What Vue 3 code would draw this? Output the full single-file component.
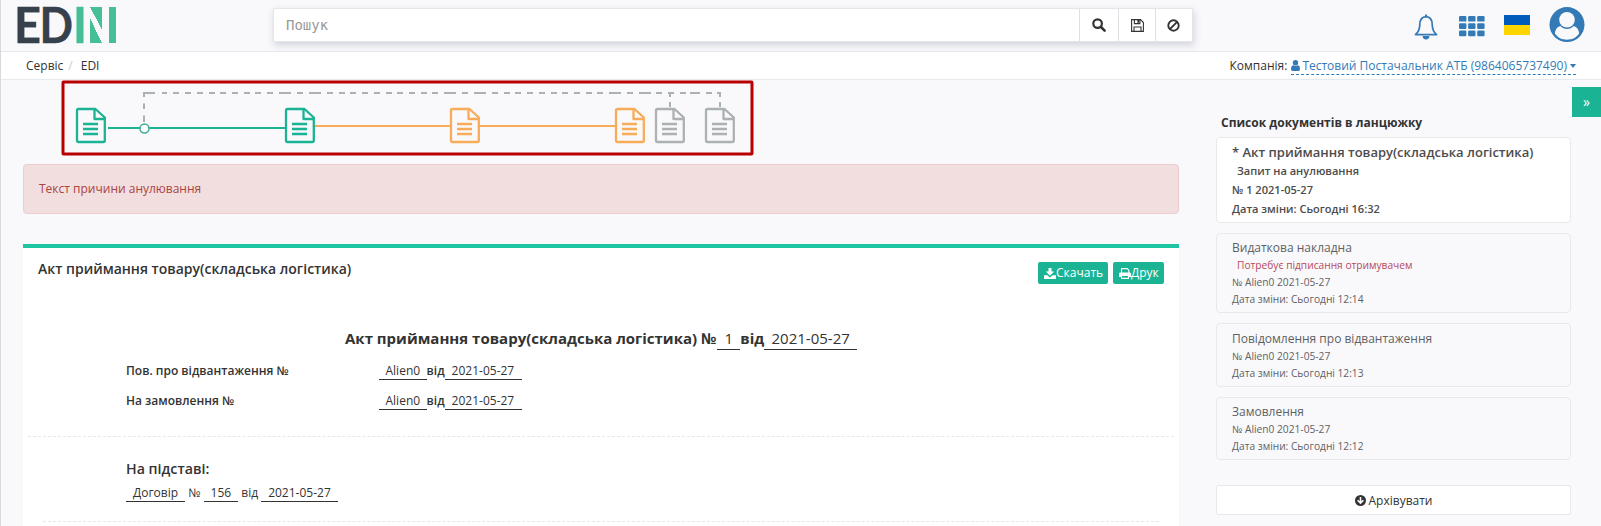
<script setup>
const dashes = [
  [143, 155], [162, 167], [173, 179], [185, 191], [197, 203], [209, 215], [220, 226], [232, 238], [244, 250],
  [255, 261], [267, 273], [279, 291], [297, 303], [309, 321], [327, 333], [339, 345], [350, 356], [362, 368],
  [374, 380], [386, 392], [397, 403], [409, 415], [421, 427], [432, 438], [444, 456], [462, 468], [474, 486],
  [492, 498], [504, 510], [515, 521], [527, 533], [539, 545], [551, 557], [562, 568], [574, 580], [586, 592],
  [597, 603], [609, 621], [627, 633], [639, 651], [656, 662], [668, 674], [680, 686], [690, 700], [706, 712],
  [717, 721]
]
const dashPath = dashes.map(([a, b]) => `M${a} 93H${b}`).join('')
const nodes = [
  { x: 76, c: '#1ab394' }, { x: 285, c: '#1ab394' }, { x: 450, c: '#f8ac59' },
  { x: 615, c: '#f8ac59' }, { x: 655, c: '#acb1b3' }, { x: 705, c: '#acb1b3' }
]
const docs = [
  { title: 'Видаткова накладна', status: 'Потребує підписання отримувачем', time: '12:14', cls: 'd2' },
  { title: 'Повідомлення про відвантаження', time: '12:13', cls: 'd3' },
  { title: 'Замовлення', time: '12:12', cls: 'd4' }
]
const refs = ['Пов. про відвантаження №', 'На замовлення №']
</script>

<template>
  <div class="page">
    <header class="top">
      <div class="logo">
        <svg width="72" height="51" viewBox="0 0 72 51">
          <g font-family="Lato" font-weight="700" font-size="50" fill="#37414d" stroke="#37414d" stroke-width=".4">
            <text x="-1" y="43" textLength="27" lengthAdjust="spacingAndGlyphs">E</text>
            <text x="24.500" y="43" textLength="33.500" lengthAdjust="spacingAndGlyphs">D</text>
            <text x="58" y="43" textLength="14" lengthAdjust="spacingAndGlyphs" fill="#46be96" stroke="#46be96">I</text>
          </g>
        </svg>
        <div class="mark"><i class="slant"></i><i class="bar"></i></div>
      </div>
      <div class="search">
        <div class="field">Пошук</div>
        <div class="sb b1">
          <svg width="14" height="14" viewBox="0 0 14 14"><circle cx="5.6" cy="5.6" r="4.3" fill="none" stroke="#333" stroke-width="2.2" /><path d="M9 9l3.6 3.6" stroke="#333" stroke-width="2.6" stroke-linecap="round" /></svg>
        </div>
        <div class="sb b2">
          <svg width="13" height="13" viewBox="0 0 13 13" fill="none" stroke="#333" stroke-width="1.1"><path d="M.6 .6H9.5L12.4 3.5V12.4H.6zM3 12.4V8h7v4.4M3.4 .6V4.6H8.9V.6" /><path d="M6.4 1h1.800v2.800H6.400z" fill="#333" stroke="none" /></svg>
        </div>
        <div class="sb b3">
          <svg width="13" height="13" viewBox="0 0 13 13" fill="none" stroke="#333" stroke-width="1.9"><circle cx="6.5" cy="6.5" r="5.2" /><path d="M2.9 10.1L10.1 2.9" /></svg>
        </div>
      </div>
      <div class="tools">
        <svg class="bell" width="24" height="28" viewBox="0 0 24 28"><path d="M12 3.6C7.5 3.8 5.9 7.2 5.8 11.5C5.700 17 4.5 19.200 1.400 21.600H22.600C19.500 19.200 18.300 17 18.200 11.500C18.100 7.200 16.500 3.800 12 3.600Z" fill="none" stroke="#337ab7" stroke-width="1.700" stroke-linejoin="round" /><path d="M11 1.500h2v2.500h-2zM8.600 23h6.800a3.400 3.400 0 0 1-6.800 0z" fill="#337ab7" /></svg>
        <svg class="apps" width="26" height="21" viewBox="0 0 26 21" fill="#337ab7"><template v-for="r in 3" :key="r"><rect v-for="c in 3" :key="c" :x="(c - 1) * 9.1" :y="(r - 1) * 7.3" width="7.4" height="5.6" rx="1.2" /></template></svg>
        <div class="flag"></div>
        <svg class="user" width="36" height="36" viewBox="0 0 36 36"><circle cx="18" cy="17.600" r="17.500" fill="#337ab7" /><path d="M11.300 19C8 20 6 23 5.900 26.600C8.800 31 13 32.800 18 32.800s9.200-1.800 12.100-6.200C30 23 28 20 24.700 19C22.800 21 20.600 22 18 22s-4.800-1-6.700-3z" fill="#f9f9fb" /><circle cx="18" cy="12.700" r="7.800" fill="#f9f9fb" /></svg>
      </div>
    </header>

    <nav class="crumbs">
      <span>Сервіс</span><span class="sep">/</span><span>EDI</span>
      <span class="company">Компанія:</span>
      <a class="link"><svg width="9" height="11" viewBox="0 0 9 11" fill="#337ab7"><circle cx="4.500" cy="2.700" r="2.700" /><path d="M0 9.200C0 6.500 1 5.300 2.300 5.200Q4.500 6.800 6.700 5.200C8 5.300 9 6.500 9 9.200Q9 11 7.400 11H1.600Q0 11 0 9.200z" /></svg><span class="cname">Тестовий Постачальник АТБ (9864065737490)</span><i class="caret"></i></a>
    </nav>

    <div class="cols">
      <main class="main">
        <svg class="chain" width="693" height="77" viewBox="61 79 693 77" fill="none">
          <rect x="63" y="82" width="689" height="72" rx="0.500" stroke="#b80000" stroke-width="3" />
          <g stroke="#acb1b3" stroke-width="2">
            <path :d="dashPath" />
            <path d="M144 92v5M144 103.500v5.500M144 115.500v6.500M670 92v5M670 102v5M720 92v5M720 102v5" />
          </g>
          <path d="M108 128H285" stroke="#1ab394" stroke-width="2" />
          <path d="M314 126H450M479 126H615" stroke="#f8ac59" stroke-width="2" />
          <circle cx="144.500" cy="128.500" r="4.500" fill="#fff" stroke="#3fae93" stroke-width="1.500" />
          <g v-for="n in nodes" :key="n.x" :transform="`translate(${n.x} 108)`" :stroke="n.c" stroke-width="2.300" stroke-linejoin="round">
            <path d="M2.500 1H19.500L28.800 9.500V32.500Q28.800 34 27.300 34H2.500Q1 34 1 32.500V2.500Q1 1 2.500 1zM18.500 1V11H28.800" fill="#f9f9fb" />
            <path d="M7 16H22M7 21H22M7 26H22" />
          </g>
        </svg>

        <div class="alert">Текст причини анулювання</div>

        <section class="card">
          <div class="chead">
            <span class="ctitle">Акт приймання товару(складська логістика)</span>
            <div class="btns">
              <span class="btn w1"><svg width="12" height="11" viewBox="0 0 12 11" fill="#fff"><path d="M4.500 0h3v3.500h2.700L6 7.700 1.800 3.500h2.700zM0 7.300h3.300L6 9.400l2.700-2.100H12V11H0z" /></svg><span>Скачать</span></span>
              <span class="btn w2"><svg width="12" height="11" viewBox="0 0 12 11"><path d="M2.500 5V.6h5.700l1.600 1.600V5M2.500 7.500v2.900h7V7.500z" fill="none" stroke="#fff" stroke-width="1.100" /><path d="M1.400 4.600h9.200Q12 4.600 12 6v3H9.500V7.200h-7V9H0V6q0-1.400 1.400-1.400z" fill="#fff" /></svg><span>Друк</span></span>
            </div>
          </div>
          <div class="doc-title"><b>Акт приймання товару(складська логістика) №</b><span class="u">1</span><b>від</b><span class="u">2021-05-27</span></div>
          <div v-for="r in refs" :key="r" class="ref">
            <span class="lab">{{ r }}</span><span class="u">Alien0</span><b>від</b><span class="u">2021-05-27</span>
          </div>
          <div class="rule"></div>
          <div class="basis">На підставі:</div>
          <div class="contract"><span class="u">Договір</span><i>№</i><span class="u">156</span><i>від</i><span class="u">2021-05-27</span></div>
          <div class="rule inner"></div>
        </section>
      </main>

      <aside class="side">
        <div class="toggle">»</div>
        <h4>Список документів в ланцюжку</h4>
        <div class="doc active">
          <div class="t">* Акт приймання товару(складська логістика)</div>
          <div class="s">Запит на анулювання</div>
          <div>№ 1 2021-05-27</div>
          <div>Дата зміни: Сьогодні 16:32</div>
        </div>
        <div v-for="d in docs" :key="d.title" class="doc" :class="d.cls">
          <div class="t">{{ d.title }}</div>
          <div v-if="d.status" class="s">{{ d.status }}</div>
          <div>№ Alien0 2021-05-27</div>
          <div>Дата зміни: Сьогодні {{ d.time }}</div>
        </div>
        <div class="archive"><svg width="11" height="11" viewBox="0 0 11 11"><circle cx="5.500" cy="5.500" r="5.500" fill="#333" /><path d="M5.500 2v6M2.600 5.300L5.500 8.200 8.400 5.300" fill="none" stroke="#fff" stroke-width="1.600" /></svg><span>Архівувати</span></div>
      </aside>
    </div>
  </div>
</template>

<style>
body { background: #f9f9fb; overflow: hidden; }
</style>
<style scoped>
* { box-sizing: border-box; }
.page { width: 1601px; height: 526px; overflow: hidden; border-left: 1px solid #d8d9dc; font: 12px/18px "Open Sans", "Noto Sans", sans-serif; color: #333; background: #f9f9fb; white-space: nowrap; }
.page svg { display: block; flex: none; }
i { font-style: normal; }
b { font-weight: 600; }
.top { height: 52px; border-bottom: 1px solid #e7eaec; display: flex; align-items: flex-start; }
.logo { display: flex; margin-left: 14px; width: 101px; gap: 3px; }
.logo svg { overflow: visible; }
.mark { display: flex; margin-top: 7px; height: 36px; width: 26px; gap: 7px; }
.slant { width: 12px; height: 36px; background: linear-gradient(to top right, transparent 50%, #46be96 50.500%) 0 0 / 12px 23px no-repeat, linear-gradient(to top right, #46be96 49.500%, transparent 50%) 0 100% / 12px 25px no-repeat; }
.bar { width: 7px; background: #46be96; }
.search { display: flex; margin: 8px 0 0 157px; height: 34px; width: 920px; border: 1px solid #e5e6ea; background: #fff; box-shadow: 1px 3px 7px rgba(90, 95, 130, .25); }
.field { flex: 1; padding-left: 12px; font: 14px/32px "DejaVu Sans Mono", monospace; color: #999; }
.sb { display: flex; align-items: center; justify-content: center; border-left: 1px solid #dfe0e5; }
.b1 { width: 39px; }
.b2 { width: 37px; }
.b3 { width: 37px; padding-right: 1px; }
.tools { display: flex; }
.bell { margin: 13px 0 0 221px; }
.apps { margin: 16px 0 0 21px; }
.flag { margin: 15px 0 0 19px; width: 26px; height: 20px; background: linear-gradient(#005bbb 50%, #ffd500 50%); }
.user { margin: 7px 0 0 19px; }
.crumbs { height: 28px; background: #fff; border-bottom: 1px solid #e7eaec; display: flex; padding: 5px 25px 0 25px; }
.sep { color: #ccc; margin: 0 8px 0 5px; }
.company { margin-left: auto; }
.link { display: flex; align-items: center; margin-left: 4px; height: 18px; color: #337ab7; border-bottom: 1px dashed #337ab7; }
.cname { margin: 0 3px 0 2px; }
.caret { border: 3.500px solid transparent; border-top: 4px solid #337ab7; border-bottom: 0; }
.cols { display: flex; }
.main { width: 1156px; margin-left: 22px; }
.chain { margin: -1px 0 8px 38px; position: relative; }
.alert { height: 50px; padding: 15px; border: 1px solid #ebccd1; border-radius: 4px; background: #f2dede; color: #a94442; }
.card { margin-top: 30px; height: 300px; background: #fff; border-top: 4px solid #1dc5a3; }
.chead { display: flex; justify-content: space-between; padding: 14px 15px 0; height: 76px; }
.ctitle { font-size: 14px; line-height: 14px; font-weight: 600; }
.btns { display: flex; gap: 5px; }
.btn { display: flex; align-items: center; height: 22px; border-radius: 2px; background: #1ab394; color: #fff; padding-left: 6px; }
.w1 { width: 70px; }
.w2 { width: 51px; }
.u { border-bottom: 1px solid #333; padding: 0 7px; }
.doc-title { display: flex; height: 26px; line-height: 28px; font-size: 15px; margin-left: 322px; }
.doc-title b { font-weight: 700; }
.doc-title b:first-child { padding-right: 1px; }
.doc-title .u { padding: 0 7.200px; }
.doc-title .u, .ref .u { height: 100%; }
.ref { display: flex; height: 20px; line-height: 22px; margin: 10px 0 0 103px; }
.ref .lab + .u { padding: 0 6.500px; }
.ref .u:last-child { padding-right: 7.500px; }
.lab { width: 253px; font-weight: 600; }
.rule { margin: 26px 5px 0; border-top: 1px dashed #e7e7e7; }
.basis { margin: 22px 0 0 103px; font-size: 14.200px; line-height: 20px; font-weight: 600; }
.contract { display: flex; height: 20px; line-height: 22px; margin: 3px 0 0 103px; }
.contract i { margin: 0 3px 0 3.200px; }
.inner { margin: 19px 20px 0; }
.side { position: relative; width: 355px; margin-left: 37px; }
.toggle { position: absolute; left: 356px; top: 7px; width: 30px; height: 30px; background: #1ab394; color: #fff; text-align: center; font-size: 14px; line-height: 29px; padding-right: 1px; }
h4 { margin: 34px 0 6px 5px; font-size: 12px; line-height: 17px; font-weight: 700; }
.doc { border: 1px solid #e7eaec; border-radius: 4px; padding: 5px 15px 0; margin-bottom: 10px; font-size: 10.200px; line-height: 17px; color: #5e6163; }
.doc .t { font-size: 12px; }
.doc .s { padding-left: 5px; color: #b8485c; }
.active { height: 86px; background: #fff; line-height: 19px; font-weight: 600; color: #4c4c4c; font-size: 11.050px; }
.active .t { font-size: 13px; line-height: 18px; }
.active .s { color: #4c4c4c; }
.d2 { height: 80px; }
.d2 .s { margin-top: 1px; }
.d3 { height: 64px; }
.d3 .t { line-height: 19px; }
.d4 { height: 63px; }
.d4 .t { line-height: 18px; }
.archive { margin-top: 25px; height: 30px; border: 1px solid #e7eaec; border-radius: 2px; background: #fff; display: flex; align-items: center; justify-content: center; gap: 3px; }
.archive span { padding-top: 1px; }
</style>
